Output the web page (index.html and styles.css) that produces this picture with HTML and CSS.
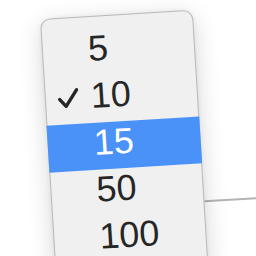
FILE: index.html
```html
<!DOCTYPE html>
<html>
<head>
<meta charset="utf-8">
<link rel="stylesheet" href="styles.css">
</head>
<body>
<div class="scene">
  <div class="menu">
    <div class="item"><span class="mark"></span><span class="label">5</span></div>
    <div class="item"><span class="mark"><svg width="21" height="20" viewBox="0 0 21 20"><path d="M1.8 10.6 L7.8 17.8 L19.2 1.8" fill="none" stroke="#262626" stroke-width="3.4" stroke-linecap="round" stroke-linejoin="round"/></svg></span><span class="label">10</span></div>
    <div class="item selected"><span class="mark"></span><span class="label">15</span></div>
    <div class="item"><span class="mark"></span><span class="label">50</span></div>
    <div class="item"><span class="mark"></span><span class="label">100</span></div>
  </div>
  <div class="pane"></div>
</div>
</body>
</html>
```

FILE: styles.css
```css
html, body {
  margin: 0;
  padding: 0;
  background: #ffffff;
  overflow: hidden;
  width: 256px;
  height: 256px;
}

.scene {
  display: flex;
  align-items: flex-start;
  width: 340px;
  margin: 19px 0 0 40px;
  transform: rotate(-3.5deg);
  transform-origin: 0 0;
}

.menu {
  position: relative;
  z-index: 1;
  flex: none;
  width: 153px;
  box-sizing: border-box;
  padding: 12px 0 14px;
  background: #f0f0f0;
  border: 1px solid #b9b9b9;
  border-radius: 10px;
  box-shadow: 0 6px 24px rgba(0, 0, 0, 0.16), 0 0 5px rgba(0, 0, 0, 0.06);
  font-family: "Liberation Sans", Arial, sans-serif;
  font-size: 36px;
  color: #262626;
}

.item {
  display: grid;
  grid-template-columns: 46px auto;
  align-items: center;
  height: 47px;
  line-height: 40px;
  padding-bottom: 7px;
  box-sizing: border-box;
  margin: 0 -1px;
}

.item .mark {
  display: flex;
  justify-content: center;
  align-items: center;
  height: 40px;
  padding-top: 1px;
  box-sizing: border-box;
}

.item .mark svg {
  display: block;
}

.item.selected {
  background: #4a92f7;
  color: #ffffff;
}

.pane {
  flex: 1;
  margin-top: 191px;
  height: 120px;
  border-top: 2px solid #b3b3b3;
}
```
